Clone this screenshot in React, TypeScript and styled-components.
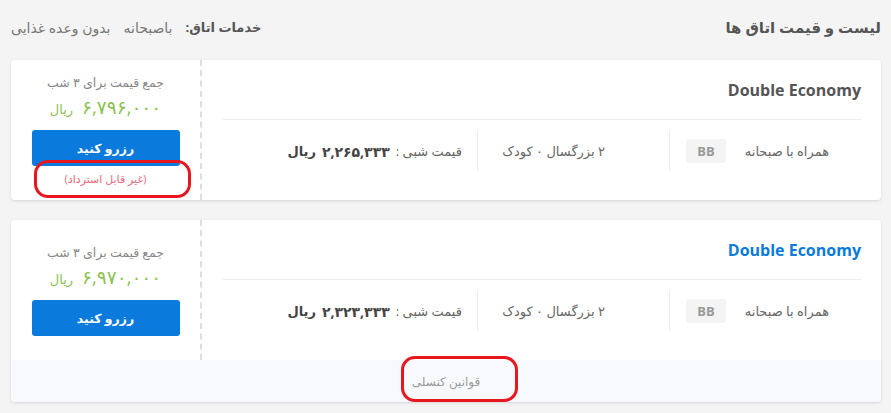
import React from "react";
import styled, { createGlobalStyle } from "styled-components";

const GlobalStyle = createGlobalStyle`
  body {
    margin: 0;
    background-color: #f4f4f4;
    font-family: "Open Sans", "DejaVu Sans", sans-serif;
  }
`;

const Page = styled.div`
  direction: rtl;
  padding: 0 10px 0 11px;
`;

const Header = styled.div`
  display: flex;
  align-items: center;
  justify-content: space-between;
  height: 54px;
`;

const PageTitle = styled.h2`
  margin: 0;
  font-size: 15px;
  font-weight: 700;
  color: #555;
`;

const Services = styled.div`
  display: flex;
  align-items: center;
  gap: 13px;
  font-size: 14px;
  color: #777;
`;

const ServicesLabel = styled.span`
  font-weight: 700;
  color: #555;
  font-size: 13px;
`;

const Card = styled.div`
  position: relative;
  background-color: #fff;
  border-radius: 4px;
  box-shadow: 0 1px 3px rgba(0, 0, 0, 0.12);
  margin-top: 6px;
  margin-bottom: 20px;
`;

const CardBody = styled.div`
  display: flex;
  height: 140px;
`;

const Main = styled.div`
  flex: 1;
  padding: 0 20px 0 21px;
  display: flex;
  flex-direction: column;
`;

const RoomName = styled.div<{ $active?: boolean }>`
  direction: ltr;
  text-align: right;
  font-size: 16px;
  font-weight: 700;
  color: ${(p) => (p.$active ? "#0a7bdc" : "#555")};
  height: 59px;
  line-height: 60px;
  border-bottom: 1px solid #ececec;
`;

const InfoRow = styled.div`
  display: flex;
  margin-top: 11px;
  height: 40px;
`;

const Segment = styled.div<{ $padRight: number; $padLeft?: number; $width?: number; $divider?: boolean }>`
  display: flex;
  align-items: center;
  justify-content: space-between;
  width: ${(p) => (p.$width ? `${p.$width}px` : "auto")};
  flex: ${(p) => (p.$width ? "none" : "1")};
  box-sizing: border-box;
  padding-right: ${(p) => p.$padRight}px;
  padding-left: ${(p) => p.$padLeft || 0}px;
  border-left: ${(p) => (p.$divider ? "1px solid #ececec" : "none")};
  font-size: 13px;
  color: #666;
`;

const Badge = styled.span`
  display: inline-flex;
  align-items: center;
  justify-content: center;
  width: 40px;
  height: 24px;
  border-radius: 3px;
  background-color: #f4f4f4;
  color: #999;
  font-weight: 700;
  font-size: 13px;
  direction: ltr;
`;

const NightPrice = styled.span`
  display: flex;
  align-items: center;
  gap: 6px;
  font-size: 13px;
`;

const Strong = styled.b<{ $size?: number }>`
  font-size: ${(p) => p.$size || 13}px;
  color: #444;
`;

const Side = styled.div`
  width: 189px;
  flex: none;
  border-right: 2px dashed #dedede;
  display: flex;
  flex-direction: column;
  align-items: center;
  justify-content: center;
`;

const TotalLabel = styled.div`
  font-size: 12.5px;
  color: #888;
`;

const Total = styled.div`
  display: flex;
  align-items: baseline;
  gap: 9px;
  margin-top: 3px;
  color: #8cc152;
`;

const TotalValue = styled.span`
  font-size: 18.5px;
  letter-spacing: 0.5px;
`;

const Currency = styled.span`
  font-size: 13px;
`;

const BookButton = styled.button`
  margin-top: 11px;
  width: 148px;
  height: 36px;
  border: none;
  border-radius: 3px;
  background-color: #0a7bdc;
  color: #fff;
  font-family: inherit;
  font-size: 12.5px;
  font-weight: 700;
`;

const NonRefund = styled.div`
  margin-top: 5px;
  font-size: 11px;
  color: #e96a7a;
`;

const Footer = styled.div`
  height: 42px;
  background-color: #f8f9fc;
  border-radius: 0 0 4px 4px;
  display: flex;
  align-items: center;
  justify-content: center;
  font-size: 12px;
  color: #999;
`;

const Mark = styled.div<{ $x: number; $y: number; $w: number; $h: number }>`
  position: absolute;
  left: ${(p) => p.$x}px;
  top: ${(p) => p.$y}px;
  width: ${(p) => p.$w}px;
  height: ${(p) => p.$h}px;
  border: 3px solid #e8161f;
  border-radius: 14px;
  box-sizing: border-box;
  pointer-events: none;
`;

interface RoomCardProps {
  active?: boolean;
  nightPrice: string;
  total: string;
  nonRefundable?: boolean;
  showRules?: boolean;
  children?: React.ReactNode;
}

const RoomCard: React.FC<RoomCardProps> = ({
  active,
  nightPrice,
  total,
  nonRefundable,
  showRules,
  children,
}) => {
  return (
    <Card>
      <CardBody>
        <Main>
          <RoomName $active={active}>Double Economy</RoomName>
          <InfoRow>
            <Segment $width={192} $padRight={32} $padLeft={16} $divider>
              <span>همراه با صبحانه</span>
              <Badge>BB</Badge>
            </Segment>
            <Segment $width={192} $padRight={64} $divider>
              <span>۲ بزرگسال ۰ کودک</span>
            </Segment>
            <Segment $padRight={15}>
              <NightPrice>
                <span>قیمت شبی :</span>
                <Strong $size={14}>{nightPrice}</Strong>
                <Strong>ریال</Strong>
              </NightPrice>
            </Segment>
          </InfoRow>
        </Main>
        <Side>
          <TotalLabel>جمع قیمت برای ۳ شب</TotalLabel>
          <Total>
            <TotalValue>{total}</TotalValue>
            <Currency>ریال</Currency>
          </Total>
          <BookButton>رزرو کنید</BookButton>
          {nonRefundable && <NonRefund>(غیر قابل استرداد)</NonRefund>}
        </Side>
      </CardBody>
      {showRules && <Footer>قوانین کنسلی</Footer>}
      {children}
    </Card>
  );
};

export default function App() {
  return (
    <Page>
      <GlobalStyle />
      <Header>
        <PageTitle>لیست و قیمت اتاق ها</PageTitle>
        <Services>
          <ServicesLabel>خدمات اتاق:</ServicesLabel>
          <span>باصبحانه</span>
          <span>بدون وعده غذایی</span>
        </Services>
      </Header>
      <RoomCard nightPrice="۲,۲۶۵,۳۳۳" total="۶,۷۹۶,۰۰۰" nonRefundable>
        <Mark $x={23} $y={100} $w={157} $h={38} />
      </RoomCard>
      <RoomCard active nightPrice="۲,۳۲۳,۳۳۳" total="۶,۹۷۰,۰۰۰" showRules>
        <Mark $x={390} $y={136} $w={117} $h={46} />
      </RoomCard>
    </Page>
  );
}
